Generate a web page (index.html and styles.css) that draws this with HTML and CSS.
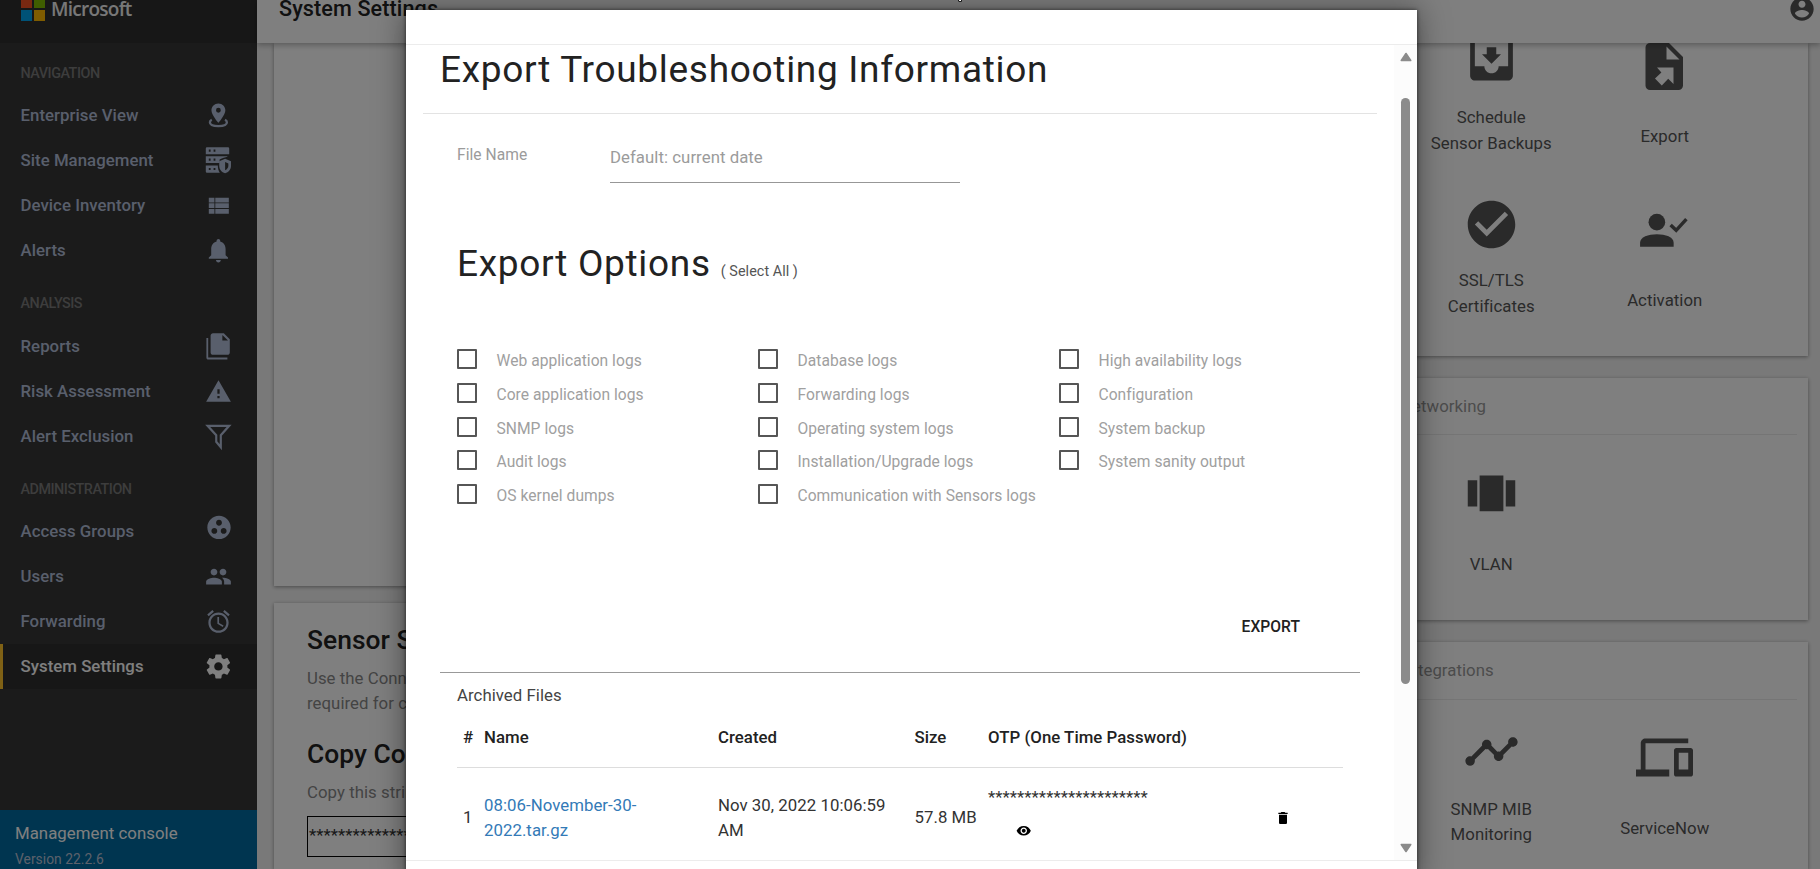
FILE: index.html
```html
<!DOCTYPE html>
<html lang="en">
<head>
<meta charset="utf-8">
<title>System Settings</title>
<link rel="stylesheet" href="styles.css">
</head>
<body>
<div class="app">
  <aside class="sidebar">
    <div class="brand">
      <span class="brand-mark"><i class="sq red"></i><i class="sq green"></i><i class="sq blue"></i><i class="sq yellow"></i></span>
      <span class="brand-name">Microsoft</span>
    </div>
    <nav class="nav">
      <h6 class="nav-title">NAVIGATION</h6>
      <a class="nav-item"><span>Enterprise View</span>
        <svg class="ico" viewBox="0 0 24 24"><path d="M12 2C8.700 2 6.200 4.500 6.200 7.700c0 4 5.800 10.500 5.800 10.500s5.800-6.500 5.800-10.500C17.800 4.500 15.300 2 12 2zm0 7.700a2 2 0 1 1 0-4 2 2 0 0 1 0 4z"/><path d="M6.500 15.700c-1 .5-1.600 1.200-1.600 2 0 1.900 3 3.200 7.100 3.200s7.100-1.300 7.100-3.200c0-.8-.6-1.500-1.600-2" fill="none" stroke="currentColor" stroke-width="1.900"/></svg></a>
      <a class="nav-item"><span>Site Management</span>
        <svg class="ico" viewBox="0 -0.500 24 24"><path fill-rule="evenodd" d="M2.500 .5H20a1 1 0 0 1 1 1v4.800H1.500V1.500a1 1 0 0 1 1-1zM4 2.500v1.700h1.500V2.500zm4 0v1.700h1.500V2.500zM1.500 8h18v.5c-2 .3-4 1.300-6.500 2.200V13.700H1.500zM4 10v1.700h1.500V10zm4 0v1.700h1.500V10zM1.500 15.700h10c0 2.500.6 4.300 1.700 6H2.500a1 1 0 0 1-1-1zM4 17.800v1.700h1.500v-1.700zm4 0v1.700h1.500v-1.700z"/><path fill-rule="evenodd" d="M17.600 10.200l4.900 2v4c0 2.800-2 5.200-4.900 6-2.900-.8-4.900-3.200-4.900-6v-4zm0 2.600v6.900c1.700-.8 2.700-2 2.700-3.700v-2z"/></svg></a>
      <a class="nav-item"><span>Device Inventory</span>
        <svg class="ico" viewBox="0 0 24 24"><path d="M4 5.600h4.700v3.900H4zM9.400 5.600h11.300v3.900H9.400zM4 10.300h4.700v3.900H4zM9.400 10.300h11.300v3.900H9.400zM4 15h4.700v3.900H4zM9.400 15h11.300v3.900H9.400z"/></svg></a>
      <a class="nav-item"><span>Alerts</span>
        <svg class="ico" viewBox="0 0 24 24"><path d="M12 22c1.100 0 2-.9 2-2h-4c0 1.100.89 2 2 2zm6-6v-5c0-3.070-1.640-5.640-4.500-6.320V4c0-.83-.67-1.500-1.500-1.500s-1.500.67-1.500 1.500v.68C7.630 5.360 6 7.920 6 11v5l-2 2v1h16v-1l-2-2z"/></svg></a>
      <h6 class="nav-title analysis">ANALYSIS</h6>
      <a class="nav-item"><span>Reports</span>
        <svg class="ico" viewBox="-0.500 0 24 24"><path d="M16 1H7c-1.100 0-2 .9-2 2v14c0 1.100.9 2 2 2h12c1.100 0 2-.9 2-2V6l-5-5zm-1.200 6V2.500L19.500 7z"/><path d="M3 5H1.500v16.500c0 .8.700 1.500 1.500 1.500h16v-1.700H3z"/></svg></a>
      <a class="nav-item"><span>Risk Assessment</span>
        <svg class="ico small" viewBox="0 0 24 24"><path d="M1 21h22L12 2 1 21zm12-3h-2v-2h2v2zm0-4h-2v-4h2v4z"/></svg></a>
      <a class="nav-item"><span>Alert Exclusion</span>
        <svg class="ico" viewBox="0 0 24 24"><path d="M3 3.200h18L14 11v10l-3.800-4.500V11z" fill="none" stroke="currentColor" stroke-width="1.800"/></svg></a>
      <h6 class="nav-title">ADMINISTRATION</h6>
      <a class="nav-item"><span>Access Groups</span>
        <svg class="ico raised" viewBox="0 0 24 24"><path d="M12 2C6.480 2 2 6.480 2 12s4.480 10 10 10 10-4.480 10-10S17.520 2 12 2zM8 17.500c-1.380 0-2.500-1.120-2.500-2.500s1.120-2.500 2.500-2.500 2.500 1.120 2.500 2.500-1.120 2.500-2.500 2.500zM9.500 8c0-1.380 1.120-2.500 2.500-2.500s2.500 1.120 2.500 2.500-1.120 2.500-2.500 2.500S9.500 9.380 9.500 8zm6.500 9.500c-1.380 0-2.500-1.120-2.500-2.500s1.120-2.500 2.500-2.500 2.500 1.120 2.500 2.500-1.120 2.500-2.500 2.500z"/></svg></a>
      <a class="nav-item"><span>Users</span>
        <svg class="ico small" viewBox="0 0 24 24"><path d="M16 11c1.660 0 2.990-1.340 2.990-3S17.660 5 16 5c-1.660 0-3 1.340-3 3s1.340 3 3 3zm-8 0c1.660 0 2.990-1.340 2.990-3S9.660 5 8 5C6.340 5 5 6.340 5 8s1.340 3 3 3zm0 2c-2.330 0-7 1.170-7 3.500V19h14v-2.500c0-2.330-4.670-3.500-7-3.500zm8 0c-.29 0-.62.02-.97.050 1.160.84 1.970 1.970 1.970 3.450V19h6v-2.500c0-2.330-4.670-3.500-7-3.500z"/></svg></a>
      <a class="nav-item"><span>Forwarding</span>
        <svg class="ico small" viewBox="0 0 24 24"><path d="M22 5.720l-4.600-3.860-1.290 1.530 4.600 3.860L22 5.720zM7.880 3.390L6.600 1.860 2 5.710l1.290 1.530 4.590-3.850zM12.500 8H11v6l4.750 2.850.75-1.230-4-2.370V8zM12 4c-4.970 0-9 4.030-9 9s4.020 9 9 9c4.970 0 9-4.030 9-9s-4.030-9-9-9zm0 16c-3.870 0-7-3.130-7-7s3.130-7 7-7 7 3.130 7 7-3.130 7-7 7z"/></svg></a>
      <a class="nav-item active"><span>System Settings</span>
        <svg class="ico" viewBox="0 0 24 24"><path d="M19.430 12.980c.04-.32.07-.64.07-.98s-.03-.66-.07-.98l2.110-1.650c.19-.15.24-.42.12-.64l-2-3.460c-.12-.22-.39-.3-.61-.22l-2.490 1c-.52-.4-1.080-.73-1.690-.98l-.38-2.650C14.460 2.180 14.250 2 14 2h-4c-.25 0-.46.18-.49.42l-.38 2.650c-.61.25-1.170.59-1.690.98l-2.490-1c-.23-.09-.49 0-.61.22l-2 3.460c-.13.22-.07.49.12.64l2.110 1.650c-.04.32-.07.65-.07.98s.03.66.07.98l-2.110 1.650c-.19.15-.24.42-.12.64l2 3.460c.12.22.39.3.61.22l2.490-1c.52.4 1.080.73 1.690.98l.38 2.650c.03.24.24.42.49.42h4c.25 0 .46-.18.49-.42l.38-2.650c.61-.25 1.170-.59 1.690-.98l2.490 1c.23.09.49 0 .61-.22l2-3.460c.12-.22.07-.49-.12-.64l-2.110-1.650zM12 15.500c-1.930 0-3.500-1.570-3.500-3.500s1.570-3.500 3.500-3.500 3.500 1.570 3.500 3.500-1.570 3.500-3.500 3.500z"/></svg></a>
    </nav>
    <div class="console"><div class="console-name">Management console</div><div class="console-version">Version 22.2.6</div></div>
  </aside>

  <main class="main">
    <header class="topbar">
      <h1 class="page-title">System Settings</h1>
      <svg class="account" viewBox="0 0 24 24"><path d="M12 2C6.480 2 2 6.480 2 12s4.480 10 10 10 10-4.480 10-10S17.520 2 12 2zm0 3c1.660 0 3 1.340 3 3s-1.340 3-3 3-3-1.340-3-3 1.340-3 3-3zm0 14.200c-2.500 0-4.710-1.280-6-3.220.03-1.990 4-3.080 6-3.080 1.990 0 5.970 1.090 6 3.080-1.290 1.940-3.500 3.220-6 3.220z"/></svg>
    </header>
    <div class="content">
      <div class="col-left">
        <section class="card blank"></section>
        <section class="card sensor">
          <h2 class="sensor-title">Sensor Setup</h2>
          <p class="sensor-text">Use the Connection string<br>required for connecting</p>
          <h2 class="sensor-title">Copy Connection String</h2>
          <p class="sensor-text">Copy this string</p>
          <div class="secret">************************</div>
        </section>
      </div>
      <div class="col-right">
        <section class="card system">
          <div class="tiles">
            <div class="tile two"><svg class="big" viewBox="0 0 24 24"><path d="M19 3H4.990c-1.110 0-1.980.89-1.980 2L3 19c0 1.100.88 2 1.990 2H19c1.100 0 2-.9 2-2V5c0-1.110-.9-2-2-2zm0 12h-4c0 1.660-1.350 3-3 3s-3-1.340-3-3H4.990V5H19v10zm-3-5h-2V7h-4v3H8l4 4 4-4z" transform="translate(0 -.6)"/></svg><span>Schedule<br>Sensor Backups</span></div>
            <div class="tile"><svg class="big" viewBox="0 0 57 57"><path fill-rule="evenodd" d="M14 5h19l14 14v28.500a4.500 4.500 0 0 1-4.500 4.500h-28.500a4.500 4.500 0 0 1-4.500-4.500v-38a4.500 4.500 0 0 1 4.500-4.500zM30.500 8.500v13h13zM21 29.500h16.500v16.500l-5.300-5.300-6.400 6.700-6.800-6.800 6.400-6.200z"/></svg><span>Export</span></div>
          </div>
          <div class="tiles">
            <div class="tile two second"><svg class="big" viewBox="0 0 24 24"><path d="M12 2C6.480 2 2 6.480 2 12s4.480 10 10 10 10-4.480 10-10S17.520 2 12 2zm-2 15l-5-5 1.410-1.410L10 14.170l7.590-7.590L19 8l-9 9z"/></svg><span>SSL/TLS<br>Certificates</span></div>
            <div class="tile"><svg class="big" viewBox="0 0 56 56"><circle cx="20.500" cy="19.800" r="8.200"/><path d="M4 44v-4c0-5.500 8-8.200 16.500-8.200S37 34.500 37 40v4z"/><path d="M34 22.500l5.500 5.300 10-11" fill="none" stroke="currentColor" stroke-width="3.400"/></svg><span>Activation</span></div>
          </div>
        </section>
        <section class="card network">
          <h3 class="card-title">Networking</h3>
          <div class="tiles"><div class="tile"><svg class="big" viewBox="0 0 24 24"><path d="M7 19h10V4H7v15zm-5-2h4V6H2v11zM18 6v11h4V6h-4z"/></svg><span>VLAN</span></div></div>
        </section>
        <section class="card integrations">
          <h3 class="card-title">Integrations</h3>
          <div class="tiles">
            <div class="tile two"><svg class="big" viewBox="0 0 24 24"><path d="M23 8c0 1.100-.9 2-2 2-.18 0-.35-.02-.51-.07l-3.560 3.550c.05.16.07.34.07.52 0 1.100-.9 2-2 2s-2-.9-2-2c0-.18.02-.36.07-.52l-2.550-2.550c-.16.05-.34.07-.52.07s-.36-.02-.52-.07l-4.550 4.560c.05.16.07.33.07.51 0 1.100-.9 2-2 2s-2-.9-2-2 .9-2 2-2c.18 0 .35.02.51.07l4.560-4.550C8.020 9.360 8 9.180 8 9c0-1.100.9-2 2-2s2 .9 2 2c0 .18-.02.36-.07.52l2.550 2.550c.16-.05.34-.07.52-.07s.36.02.52.07l3.550-3.560C19.020 8.350 19 8.180 19 8c0-1.100.9-2 2-2s2 .9 2 2z"/></svg><span>SNMP MIB<br>Monitoring</span></div>
            <div class="tile"><svg class="big" viewBox="0 0 24 24"><path d="M4 6h18V4H4c-1.100 0-2 .9-2 2v11H0v3h14v-3H4V6zm19 2h-6c-.55 0-1 .45-1 1v10c0 .55.45 1 1 1h6c.55 0 1-.45 1-1V9c0-.55-.45-1-1-1zm-1 9h-4v-7h4v7z"/></svg><span>ServiceNow</span></div>
          </div>
        </section>
      </div>
    </div>
  </main>
</div>

<div class="backdrop">
  <div class="dialog" role="dialog">
    <div class="dialog-head"></div>
    <div class="dialog-body">
      <div class="dialog-content">
        <h2 class="dialog-title">Export Troubleshooting Information</h2>
        <div class="field"><label class="field-label">File Name</label><div class="field-input">Default: current date</div></div>
        <div class="options-head"><h2 class="options-title">Export Options</h2><span class="select-all">( Select All )</span></div>
        <div class="options">
          <label class="option"><i class="box"></i><span>Web application logs</span></label>
          <label class="option"><i class="box"></i><span>Database logs</span></label>
          <label class="option"><i class="box"></i><span>High availability logs</span></label>
          <label class="option"><i class="box"></i><span>Core application logs</span></label>
          <label class="option"><i class="box"></i><span>Forwarding logs</span></label>
          <label class="option"><i class="box"></i><span>Configuration</span></label>
          <label class="option"><i class="box"></i><span>SNMP logs</span></label>
          <label class="option"><i class="box"></i><span>Operating system logs</span></label>
          <label class="option"><i class="box"></i><span>System backup</span></label>
          <label class="option"><i class="box"></i><span>Audit logs</span></label>
          <label class="option"><i class="box"></i><span>Installation/Upgrade logs</span></label>
          <label class="option"><i class="box"></i><span>System sanity output</span></label>
          <label class="option"><i class="box"></i><span>OS kernel dumps</span></label>
          <label class="option"><i class="box"></i><span>Communication with Sensors logs</span></label>
        </div>
        <div class="actions"><span class="export-btn">EXPORT</span></div>
        <div class="archive">
          <div class="archive-title">Archived Files</div>
          <table class="files">
            <colgroup><col class="c-num"><col class="c-name"><col class="c-created"><col class="c-size"><col class="c-otp"><col></colgroup>
            <thead><tr><th class="num">#</th><th>Name</th><th>Created</th><th>Size</th><th>OTP (One Time Password)</th><th></th></tr></thead>
            <tbody><tr>
              <td class="num">1</td>
              <td><a class="file-link">08:06-November-30-<br>2022.tar.gz</a></td>
              <td>Nov 30, 2022 10:06:59<br>AM</td>
              <td>57.8 MB</td>
              <td class="otp-cell"><div class="otp">**********************</div><svg class="eye" viewBox="0 0 24 24"><path d="M12 4.500C7 4.500 2.730 7.610 1 12c1.730 4.390 6 7.500 11 7.500s9.270-3.110 11-7.500c-1.730-4.390-6-7.500-11-7.500zM12 17c-2.760 0-5-2.240-5-5s2.240-5 5-5 5 2.240 5 5-2.240 5-5 5zm0-8c-1.660 0-3 1.340-3 3s1.340 3 3 3 3-1.340 3-3-1.340-3-3-3z"/></svg></td>
              <td><svg class="trash" viewBox="0 0 24 24"><path d="M6 19c0 1.100.9 2 2 2h8c1.100 0 2-.9 2-2V7H6v12zM19 4h-3.500l-1-1h-5l-1 1H5v2h14V4z"/></svg></td>
            </tr></tbody>
          </table>
        </div>
      </div>
      <div class="scrollbar">
        <svg class="arrow" viewBox="0 0 12 10"><path d="M6 1.500L10.700 8.500H1.300z"/></svg>
        <i class="thumb"></i>
        <svg class="arrow down" viewBox="0 0 12 10"><path d="M6 8.500L10.700 1.500H1.300z"/></svg>
      </div>
    </div>
    <div class="dialog-foot"></div>
  </div>
  <i class="cursor"></i>
</div>
</body>
</html>
```

FILE: styles.css
```css
* { box-sizing: border-box; }
body { margin: 0; height: 869px; overflow: hidden; font-family: Roboto, "Liberation Sans", sans-serif; font-size: 16.8px; letter-spacing: .04px; color: #333; }
h1, h2, h3, h6, p { margin: 0; font-weight: 400; }
svg { display: block; fill: currentColor; flex: none; }
i { display: block; font-style: normal; }

.app { display: flex; height: 869px; }

/* Sidebar */
.sidebar { width: 257px; flex: none; display: flex; flex-direction: column; background: #363636; color: #b2bed8; }
.brand { height: 43px; background: #2e2e2e; display: flex; align-items: flex-start; padding-left: 21px; gap: 6px; }
.brand-mark { display: grid; grid-template-columns: 11px 11px; grid-auto-rows: 11px; gap: 2px; margin-top: -3px; }
.red { background: #f25022; } .green { background: #7fba00; } .blue { background: #00a4ef; } .yellow { background: #ffb900; }
.brand-name { font: 600 19px/24px "Open Sans", sans-serif; letter-spacing: -.75px; color: #f0f0f0; margin-top: -3px; }
.nav { flex: 1; }
.nav-title { height: 50px; padding: 21px 0 0 20.500px; font-size: 14.4px; line-height: 20px; font-weight: 500; letter-spacing: -.5px; color: #7a7a7a; }
.nav-title.analysis { height: 51px; }
.nav-item { height: 45px; display: flex; align-items: center; justify-content: space-between; padding: 0 24px 0 20.500px; font-weight: 500; }
.nav-item span { padding-bottom: 2px; }
.nav-item.active { background: #2e2e2e; color: #fff; border-left: 3px solid #ffc32b; padding-left: 17.500px; }
.ico { width: 28.800px; height: 28.800px; }
.ico.small { width: 27px; height: 27px; margin-right: 1px; }
.ico.raised { width: 28px; margin-top: -8px; }
.console { height: 59px; background: #006ba0; padding: 11px 0 0 15px; color: #fff; }
.console-name { line-height: 24px; font-size: 16.8px; }
.console-version { line-height: 20px; margin-top: 4px; font-size: 13.800px; color: #b9c2d6; }

/* Page */
.main { flex: 1; display: flex; flex-direction: column; background: #f3f3f3; }
.topbar { position: relative; z-index: 1; height: 43px; flex: none; background: #fff; box-shadow: 0 2px 6px rgba(0,0,0,.3); display: flex; justify-content: space-between; padding: 0 4px 0 22px; color: #222; }
.page-title { font-size: 21.600px; line-height: 26px; font-weight: 500; letter-spacing: .1px; margin-top: -4px; }
.account { width: 28px; height: 28px; margin-top: -5px; color: #555; }
.content { flex: 1; min-height: 0; display: flex; justify-content: space-between; padding: 0 12px 0 17px; }
.card { background: #fff; box-shadow: 0 1px 4px rgba(0,0,0,.4); }
.col-left { width: 600px; display: flex; flex-direction: column; gap: 17px; }
.blank { height: 543px; flex: none; }
.sensor { flex: 1; padding: 21px 33px 0; }
.sensor-title { font-size: 26.400px; line-height: 32px; font-weight: 500; color: #222; }
.sensor-text { line-height: 25px; color: #888; margin: 10px 0 22px; }
.sensor-text:last-of-type { margin-bottom: 11px; }
.secret { height: 41px; border: 1px solid #000; line-height: 36px; padding-left: 1px; color: #333; width: 400px; overflow: hidden; }
.col-right { width: 422px; display: flex; flex-direction: column; gap: 22px; }
.system { height: 313px; flex: none; display: flex; flex-direction: column; }
.system .tiles { height: 164px; flex: none; }
.system .tiles:first-child { margin-top: -11px; }
.network { height: 242px; flex: none; }
.integrations { flex: 1; min-height: 0; }
.card-title { height: 57px; line-height: 56px; margin: 0 11px; padding-left: 3px; border-bottom: 1px solid #ebebeb; font-size: 16.800px; color: #999; }
.integrations .card-title { height: 58px; padding-left: 7px; }
.network .tiles { margin-top: 25px; }
.integrations .tiles { margin-top: 23px; }
.tiles { display: flex; padding-left: 18.500px; }
.tile { width: 173.500px; padding-top: 6px; display: flex; flex-direction: column; align-items: center; gap: 28px; color: #555; text-align: center; line-height: 26px; }
.tile.two { padding-top: 0; gap: 15px; }
.tile.two.second { gap: 14px; }
.integrations .tile { gap: 28.500px; }
.integrations .tile.two { line-height: 25px; gap: 16.500px; }
.big { width: 57px; height: 57px; }
.tile span { color: #555; }

/* Dialog */
.backdrop { position: absolute; z-index: 10; inset: 0; background: rgba(0,0,0,.5); overflow: hidden; }
.dialog { position: absolute; left: 406px; top: 10px; width: 1011px; height: 869px; background: #fff; display: flex; flex-direction: column; box-shadow: 0 13px 18px -8px rgba(0,0,0,.3), 0 0 28px 3px rgba(0,0,0,.35), 0 0 4px rgba(0,0,0,.6); }
.dialog-head { height: 35px; flex: none; border-bottom: 1px solid #ececec; }
.dialog-body { height: 815px; flex: none; display: flex; overflow: hidden; }
.dialog-foot { flex: 1; border-top: 1px solid #ececec; }
.dialog-content { width: 988px; flex: none; }
.dialog-title { margin: 0 17px; padding-left: 17px; height: 69px; border-bottom: 1px solid #e3e3e3; font-size: 37px; line-height: 49px; letter-spacing: .7px; color: #222; }
.field { display: flex; padding: 18px 0 0 51px; height: 69px; }
.field-label { width: 153px; font-size: 15.600px; line-height: 46px; color: #9b9b9b; }
.field-input { width: 350px; height: 51px; line-height: 51px; border-bottom: 1px solid #979797; color: #9b9b9b; }
.options-head { display: flex; align-items: baseline; gap: 10px; padding-left: 51px; margin-top: 56px; height: 110px; line-height: 50px; }
.options-title { font-size: 37px; letter-spacing: .7px; color: #222; }
.select-all { font-size: 14.400px; color: #555; }
.options { display: grid; grid-template-columns: repeat(3, 301px); grid-auto-rows: 33.750px; padding-left: 51px; }
.option { display: flex; gap: 19.500px; color: #a0a0a0; font-size: 15.600px; line-height: 25px; white-space: nowrap; }
.box { width: 20px; height: 20px; border: 2px solid #565656; border-radius: 1px; flex: none; }
.actions { height: 154px; display: flex; justify-content: flex-end; padding: 97px 94px 0 0; }
.export-btn { font-size: 15.600px; line-height: 24px; font-weight: 500; color: #212121; }
.archive { margin: 0 34px; padding: 9px 17px 0; border-top: 1px solid #999; }
.archive-title { line-height: 26px; color: #444; }
.files { width: 886px; margin-top: 4px; table-layout: fixed; border-collapse: collapse; }
.c-num { width: 27px; } .c-name { width: 234px; } .c-created { width: 196.500px; } .c-size { width: 73.500px; } .c-otp { width: 285px; }
.files th, .files td { padding: 0; text-align: left; line-height: 25px; white-space: nowrap; }
.files th { height: 56px; padding-bottom: 4px; font-weight: 500; color: #222; border-bottom: 1px solid #ddd; }
.files td { height: 99px; color: #333; }
.files .num { padding-left: 6px; }
.files .file-link { color: #337ab7; }
.files .otp-cell { padding-bottom: 13px; }
.otp { line-height: 26px; }
.eye { width: 15.500px; height: 15.500px; margin: 13px 0 0 28px; color: #000; }
.trash { width: 16px; height: 16px; margin-left: 2px; color: #000; }
.scrollbar { width: 23px; flex: none; background: #fcfcfc; display: flex; flex-direction: column; align-items: center; padding-top: 7px; }
.arrow { width: 12px; height: 10px; color: #8b8b8b; stroke: currentColor; stroke-width: 1.600px; stroke-linejoin: round; }
.thumb { width: 9px; height: 586px; margin: 36px 0 159px; border-radius: 5px; background: #8b8b8b; }
.cursor { position: absolute; left: 958px; top: 0; width: 4px; height: 2px; background: #fff; border: solid #000; border-width: 0 1px 1px; border-radius: 0 0 2px 2px; }
```
